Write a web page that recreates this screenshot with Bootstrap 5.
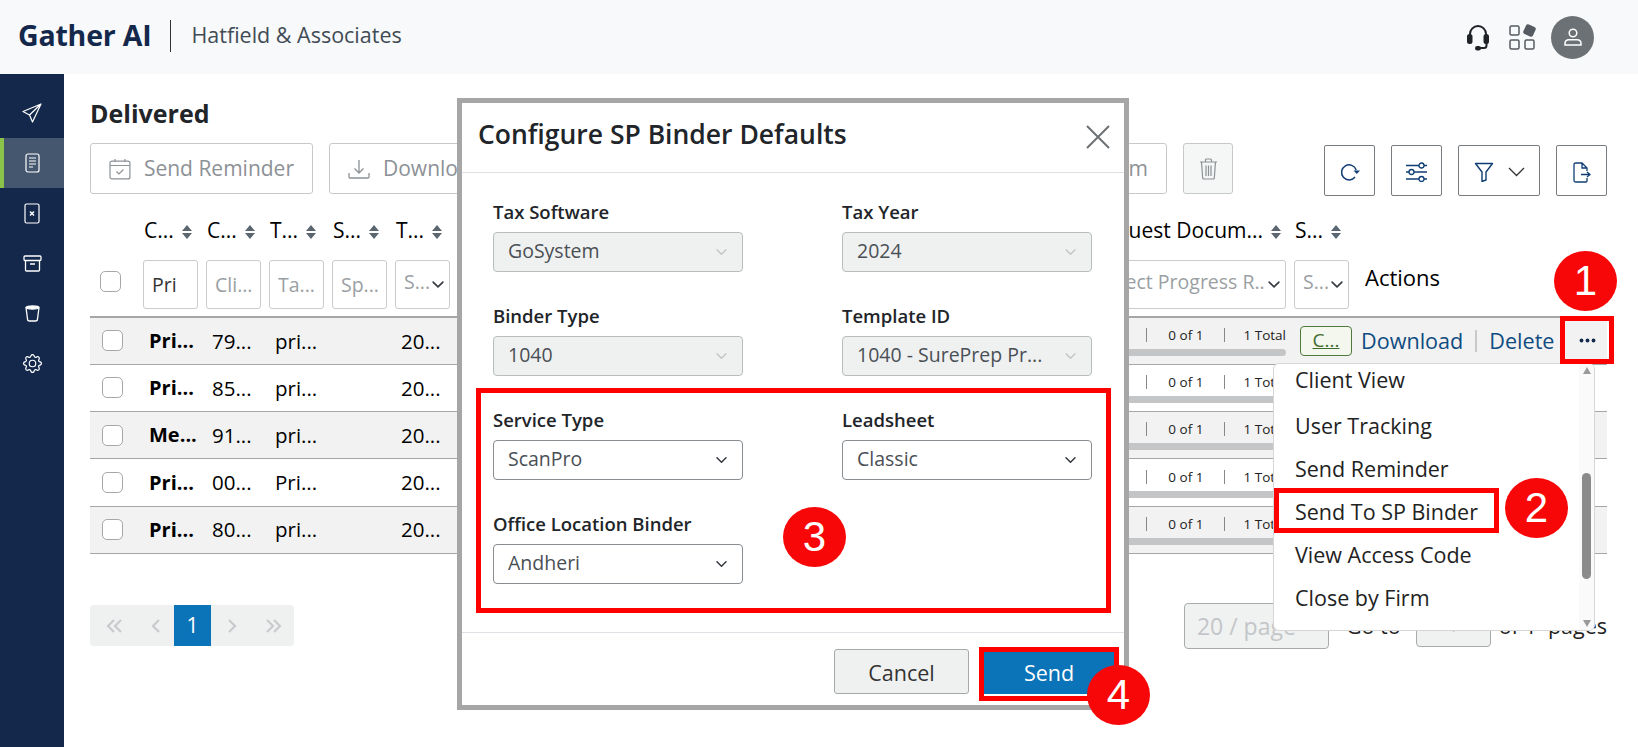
<!DOCTYPE html>
<html lang="en"><head><meta charset="utf-8"><title>Delivered</title>
<link href="https://cdn.jsdelivr.net/npm/bootstrap@5.3.0/dist/css/bootstrap.min.css" rel="stylesheet">
<style>
html,body{height:100%;overflow:hidden}
body{font-family:"Open Sans","Liberation Sans",sans-serif;color:#212529;background:#fff}
.gx-root{height:747px;width:1638px;overflow:hidden}
.gx-top{height:74px;background:#f8f9fa;flex:none;padding:0 44px 0 18px}
.gx-logo{font-size:28.500px;font-weight:700;color:#14284b;letter-spacing:-.2px;margin-bottom:3px}
.gx-vr{width:1px;height:32px;background:#333;margin:0 20px 3px 19px}
.gx-firm{font-size:21.500px;color:#414b55;margin-bottom:3px}
.gx-side{width:64px;background:#14284b;flex:none;padding-top:14px}
.gx-sitem{height:50px;color:#fff;border-left:4px solid transparent;padding-right:4px}
.gx-sitem.gx-on{background:#45566f;border-left-color:#8bc34a}
.gx-main{padding:0 31px 0 26px;width:1574px}
.gx-h{font-size:25px;font-weight:700;line-height:34px;margin:22px 0 13px;color:#212529}
.gx-tool{height:51px;font-size:21px;color:#8c9196;border:1px solid #c6c9cc;background:#fff;border-radius:3px;padding:0 18px;white-space:nowrap}
.gx-tool.gx-trash{width:50px;background:#f5f6f6;padding:0}
.gx-left{width:1143px}
.gx-ib{height:51px;width:51px;border:1px solid #777c80;border-radius:2px;background:#fff;color:#0f3d73;padding:0;margin-top:2px}
.gx-ib.gx-w{width:82px}
table.gx-t{table-layout:fixed;width:1517px;margin:16px 0 0;font-size:20.500px;--bs-table-bg:transparent;--bs-table-striped-bg:#f2f2f2;--bs-table-accent-bg:transparent;--bs-table-striped-color:#000;color:#000}
.gx-t th,.gx-t td{padding:0;border:0;background:transparent;white-space:nowrap;overflow:hidden}
.gx-t thead tr:first-child th{height:38px;font-weight:400;font-size:21px;padding-left:1px;vertical-align:middle}
.gx-t thead tr:nth-child(2) th{height:67px;font-weight:400;padding:0 8px 7px 0;vertical-align:bottom}
.gx-t tbody tr{height:47.300px}
.gx-t tbody td{border-bottom:1.600px solid #a6a6a6;vertical-align:middle;padding-left:6px}
.gx-t tbody{border-top:2.500px solid #a6a6a6}
.gx-t tbody tr:nth-child(odd) td{background:#f2f2f2}
.gx-t td.gx-b{font-weight:700;font-size:20px}
.gx-t td.gx-cc{padding-left:12px}
.gx-t th.gx-cc{padding-left:10px!important;padding-bottom:24px!important}
.gx-t td.gx-pc{padding:0;vertical-align:bottom}
.gx-sort{margin-left:8px;vertical-align:-1px}
.gx-cb{width:21px;height:21px;margin:0;border:1px solid #a6a6a6;border-radius:5px;--bs-form-check-bg:#fff;display:block}
.gx-f{height:49px;border:1px solid #c9ccce;border-radius:3px;font-size:19.500px;padding:0 8px;color:#333;background-color:#fff;box-shadow:none}
.gx-f::placeholder{color:#9a9fa3}
.gx-fs{height:49px;border:1px solid #c9ccce;border-radius:3px;font-size:19.500px;padding:0 20px 6px 8px;color:#9a9fa3;background-position:right 3px center;background-size:16px 13px;box-shadow:none}
.gx-rq{text-align:right;padding-right:8px!important}
.gx-prog{padding-right:8px;font-size:13.500px;line-height:18px;color:#222}
.gx-pr{gap:21px;justify-content:flex-end}
.gx-pr>span:last-child{margin-left:-3px}
.gx-sp{width:1px;height:14px;background:#888}
.gx-bar{height:7px;background:#c4c5c6;border-radius:0 4px 4px 0;margin:5px 0 8px}
.gx-ok{width:52px;height:30px;border:1px solid #4e7a3c;border-radius:4px;background:#f3f7ee;color:#3f6b2e;font-size:19px;line-height:27px;text-align:center;text-decoration:underline;margin-left:0}
.gx-act{font-size:21.600px;color:#0f4c81;text-decoration:none}
.gx-acts{margin-left:-2px;gap:12px}
.gx-sp2{width:2px;height:22px;background:#c7c9cb}
.gx-dots{width:17px;margin-left:12px;color:#14284b}
.gx-pgr{margin-top:49px}
.gx-pag{height:41px;width:204px;background:#eff1f1;border-radius:4px;margin:0;overflow:hidden}
.gx-pag .page-item .page-link{height:41px;border:0;background:transparent;color:#c8cbcd;padding:0;display:flex;align-items:center;justify-content:center;border-radius:0;margin:0}
.gx-pag .page-item.active .page-link{background:#0b73b8;color:#fff;font-size:21px;width:37px}
.gx-ps{width:145px;height:46px;background:#f0f1f1;border:1px solid #a8abad;border-radius:4px;font-size:23px;color:#c3c6c8;padding:0 12px;line-height:44px}
.gx-goi{width:75px;height:43px;background:#f0f1f1;border:1px solid #a8abad;border-radius:4px;text-align:center;color:#c3c6c8;font-size:18px;line-height:41px}
.gx-pt{font-size:21.500px;color:#222}
.gx-menu{position:absolute;left:1273px;top:363px;width:322px;height:268px;background:#fff;border:1px solid #d4d6d8;border-radius:6px;z-index:5;overflow:hidden}
.gx-menu .list-group-item{border:0;background:transparent;padding:0 0 0 21px;height:43px;line-height:43px;font-size:21.500px;color:#222;white-space:nowrap}
.gx-mlist{margin-top:-6px}
.gx-mlist .list-group-item:first-child{height:46px}
.gx-scroll{position:absolute;right:0;top:0;bottom:0;width:15px;background:#fafafa}
.gx-thumb{position:absolute;right:3px;top:109px;height:106px;width:9px;background:#8a8a8a;border-radius:5px}
.gx-arr{position:absolute;right:3px;width:0;height:0;border-left:4.500px solid transparent;border-right:4.500px solid transparent}
.gx-dlg{position:absolute;left:457px;top:98px;width:672px;height:612px;border:5px solid #a6a6a6;background:#fff;border-radius:0;z-index:6}
.gx-dlg .modal-header{height:70px;padding:0 14px 6px 16px;border-bottom:1px solid #dee2e6;border-radius:0}
.gx-dlg .modal-title{font-size:26.500px;font-weight:600;color:#212529}
.gx-x{background:none;border:0;padding:0;line-height:0;margin-top:4px}
.gx-dlg .modal-body{padding:27px 0 0 31px;height:459px;flex:none;display:grid;grid-template-columns:250px 250px;column-gap:99px;row-gap:32px;align-content:start}
.gx-lab{font-weight:600;font-size:18.500px;line-height:24px;margin:0 0 8px;color:#212529;display:block}
.gx-sel{height:40px;border:1px solid #898e92;border-radius:4px;font-size:19.500px;color:#4a4f55;padding:0 30px 3px 14px;background-size:15px 12px;background-position:right 13px center;box-shadow:none;--bs-body-color:#4a4f55}
.gx-sel:disabled{background-color:#eff1f1;border-color:#b9bcbe;color:#4a4f55;opacity:1;background-image:url("data:image/svg+xml,%3csvg xmlns='http://www.w3.org/2000/svg' viewBox='0 0 16 16'%3e%3cpath fill='none' stroke='%23c3c6c8' stroke-linecap='round' stroke-linejoin='round' stroke-width='2' d='m2 5 6 6 6-6'/%3e%3c/svg%3e")}
.gx-dlg .modal-footer{height:73px;padding:4px 10px 0 0;border-top:1px solid #dee2e6;gap:15px;border-radius:0;flex:none}
.gx-dlg .modal-footer>*{margin:0}
.gx-can{width:135px;height:45px;background:#eff1f1;border:1px solid #a6a9ab;border-radius:3px;font-size:21.500px;color:#333;line-height:1;padding:3px 0 0}
.gx-snd{width:130px;height:43px;background:#0b73b8;border:0;border-radius:0;font-size:21.500px;color:#fff;margin-top:2px!important;line-height:1;padding:2px 0 0}
.gx-rbox{position:absolute;border:5px solid #f00;z-index:7;pointer-events:none}
.gx-num{position:absolute;width:63px;height:60px;border-radius:50%;background:#f70707;color:#fff;font-family:"Liberation Sans",Arial,sans-serif;font-size:42px;line-height:60px;text-align:center;z-index:8}
</style></head>
<body>
<div class="gx-root position-relative d-flex flex-column">
 <header class="gx-top d-flex align-items-center">
  <span class="gx-logo">Gather AI</span><span class="gx-vr"></span><span class="gx-firm">Hatfield &amp; Associates</span>
  <div class="ms-auto d-flex align-items-center">
   <svg width="22" height="27" viewBox="0 0 22 27" fill="none" stroke="#1f2328" stroke-width="2"><path d="M3 15V10a8 8 0 0 1 16 0v5"/><rect x="1" y="11" width="3.500" height="8" rx="1.500" fill="#1f2328"/><rect x="17.500" y="11" width="3.500" height="8" rx="1.500" fill="#1f2328"/><path d="M19.500 19v2.500a2.500 2.500 0 0 1-2.500 2.500h-4"/><rect x="9" y="23" width="4" height="2.500" rx="1.200" fill="#1f2328"/></svg>
   <svg style="margin-left:20px" width="27" height="26" viewBox="0 0 27 26" fill="none" stroke="#555b60" stroke-width="1.500"><rect x="1" y="2" width="9" height="9" rx="1.500"/><rect x="1" y="16" width="9" height="9" rx="1.500"/><rect x="16" y="16" width="9" height="9" rx="1.500"/><rect x="16" y="2" width="9" height="9" rx="1.500" fill="#555b60" transform="rotate(25 20.500 6.500)"/></svg>
   <div class="rounded-circle d-flex align-items-center justify-content-center" style="width:43px;height:43px;background:#6b7174;margin-left:15px">
    <svg width="20" height="20" viewBox="0 0 20 20" fill="none" stroke="#fff" stroke-width="1.500"><circle cx="10" cy="6" r="3.800"/><path d="M2 18v-1.500c0-2.500 2-3.800 4-3.800h8c2 0 4 1.300 4 3.800V18z"/></svg>
   </div>
  </div>
 </header>
 <div class="d-flex flex-grow-1" style="min-height:0">
  <nav class="gx-side">
   <div class="gx-sitem d-flex align-items-center justify-content-center"><svg width="20" height="20" viewBox="0 0 20 20" fill="none" stroke="#fff" stroke-width="1.200" stroke-linejoin="round"><path d="M19 1 1 8.500 7.500 12 10.500 19zM19 1 7.500 12"/></svg></div>
   <div class="gx-sitem gx-on d-flex align-items-center justify-content-center"><svg width="15" height="20" viewBox="0 0 15 20" fill="none" stroke="#fff" stroke-width="1.200"><rect x="1" y="1" width="13" height="18" rx="2"/><path d="M4 5h7M4 8h7M4 11h7M4 14h4"/></svg></div>
   <div class="gx-sitem d-flex align-items-center justify-content-center"><svg width="16" height="21" viewBox="0 0 16 21" fill="none" stroke="#fff" stroke-width="1.200"><rect x="1" y="1" width="14" height="19" rx="1.500"/><path d="m6 8.500 4 4M10 8.500l-4 4" stroke-width="1.500"/></svg></div>
   <div class="gx-sitem d-flex align-items-center justify-content-center"><svg width="19" height="17" viewBox="0 0 19 17" fill="none" stroke="#fff" stroke-width="1.300"><rect x="1" y="1" width="17" height="4.500" rx="1"/><path d="M2.500 5.500V15a1 1 0 0 0 1 1h12a1 1 0 0 0 1-1V5.500M7 9h5"/></svg></div>
   <div class="gx-sitem d-flex align-items-center justify-content-center"><svg width="15" height="17" viewBox="0 0 15 17" fill="none" stroke="#fff" stroke-width="1.300"><ellipse cx="7.500" cy="2.500" rx="6.500" ry="1.500" fill="#fff"/><path d="M1 2.500 2.500 14a2 2 0 0 0 2 2h6a2 2 0 0 0 2-2L14 2.500"/></svg></div>
   <div class="gx-sitem d-flex align-items-center justify-content-center"><svg width="19" height="19" viewBox="0 0 16 16" fill="#fff"><path d="M8 4.754a3.246 3.246 0 1 0 0 6.492 3.246 3.246 0 0 0 0-6.492zM5.754 8a2.246 2.246 0 1 1 4.492 0 2.246 2.246 0 0 1-4.492 0z"/><path d="M9.796 1.343c-.527-1.790-3.065-1.790-3.592 0l-.094.319a.873.873 0 0 1-1.255.520l-.292-.160c-1.640-.892-3.433.902-2.540 2.541l.159.292a.873.873 0 0 1-.520 1.255l-.319.094c-1.790.527-1.790 3.065 0 3.592l.319.094a.873.873 0 0 1 .520 1.255l-.160.292c-.892 1.640.901 3.434 2.541 2.540l.292-.159a.873.873 0 0 1 1.255.520l.094.319c.527 1.790 3.065 1.790 3.592 0l.094-.319a.873.873 0 0 1 1.255-.520l.292.160c1.640.893 3.434-.902 2.540-2.541l-.159-.292a.873.873 0 0 1 .520-1.255l.319-.094c1.790-.527 1.790-3.065 0-3.592l-.319-.094a.873.873 0 0 1-.520-1.255l.160-.292c.893-1.640-.902-3.433-2.541-2.540l-.292.159a.873.873 0 0 1-1.255-.520l-.094-.319zm-2.633.283c.246-.835 1.428-.835 1.674 0l.094.319a1.873 1.873 0 0 0 2.693 1.115l.291-.160c.764-.415 1.600.420 1.184 1.185l-.159.292a1.873 1.873 0 0 0 1.116 2.692l.318.094c.835.246.835 1.428 0 1.674l-.319.094a1.873 1.873 0 0 0-1.115 2.693l.160.291c.415.764-.420 1.600-1.185 1.184l-.291-.159a1.873 1.873 0 0 0-2.693 1.116l-.094.318c-.246.835-1.428.835-1.674 0l-.094-.319a1.873 1.873 0 0 0-2.692-1.115l-.292.160c-.764.415-1.600-.420-1.184-1.185l.159-.291A1.873 1.873 0 0 0 1.945 8.930l-.319-.094c-.835-.246-.835-1.428 0-1.674l.319-.094A1.873 1.873 0 0 0 3.060 4.377l-.160-.292c-.415-.764.420-1.600 1.185-1.184l.292.159a1.873 1.873 0 0 0 2.692-1.115l.094-.319z"/></svg></div>
  </nav>
  <main class="gx-main">
   <h1 class="gx-h">Delivered</h1>
   <div class="d-flex align-items-start">
    <div class="gx-left d-flex" style="gap:16px">
     <button class="gx-tool d-flex align-items-center" style="width:223px" type="button"><svg style="margin-right:13px" width="22" height="22" viewBox="0 0 22 22" fill="none" stroke="#8c9196" stroke-width="1.200"><rect x="1" y="3" width="20" height="18" rx="2"/><path d="M1 7.500h20M6 1v3M16 1v3M7.500 13.500l2.500 2.500 4.500-4.500"/></svg>Send Reminder</button>
     <button class="gx-tool d-flex align-items-center" type="button" style="width:240px"><svg style="margin-right:13px" width="22" height="22" viewBox="0 0 22 22" fill="none" stroke="#8c9196" stroke-width="1.300"><path d="M11 2v13M6.500 10.500 11 15l4.500-4.500M1 15v4a1 1 0 0 0 1 1h18a1 1 0 0 0 1-1v-4"/></svg>Download</button>
     <button class="gx-tool ms-auto" type="button" style="width:180px;text-align:right">Close by Firm</button>
     <button class="gx-tool gx-trash d-flex align-items-center justify-content-center" type="button" aria-label="Delete"><svg width="19" height="22" viewBox="0 0 19 22" fill="none" stroke="#8c9196" stroke-width="1.200"><path d="M1 4h17M6.500 4V2a1 1 0 0 1 1-1h4a1 1 0 0 1 1 1v2M2.500 4l1.200 16a1 1 0 0 0 1 1h9.600a1 1 0 0 0 1-1L16.500 4M7 7.500V18M9.500 7.500V18M12 7.500V18"/></svg></button>
    </div>
    <div class="d-flex ms-auto" style="gap:16px">
     <button class="gx-ib" type="button" aria-label="Refresh"><svg width="20" height="20" viewBox="0 0 20 20" fill="none" stroke="currentColor" stroke-width="1.500"><path d="M15 15A7.500 7.500 0 1 1 16.200 8"/><path d="M13.500 8.500h6.500l-3.200 3.600z" fill="currentColor" stroke="none"/></svg></button>
     <button class="gx-ib" type="button" aria-label="Settings"><svg width="23" height="20" viewBox="0 0 23 20" fill="none" stroke="currentColor" stroke-width="1.300"><path d="M1 3.500h13M19 3.500h3M1 10h3M9 10h13M1 17h13M19 17h3"/><circle cx="16.500" cy="3.500" r="2.500"/><circle cx="6.500" cy="10" r="2.500"/><circle cx="16.500" cy="17" r="2.500"/></svg></button>
     <button class="gx-ib gx-w" type="button" aria-label="Filter"><svg width="20" height="20" viewBox="0 0 20 20" fill="none" stroke="currentColor" stroke-width="1.400" stroke-linejoin="round"><path d="M1.500 1.500h17L12 10v8l-4 1.500V10z"/></svg><svg style="margin-left:14px" width="17" height="10" viewBox="0 0 17 10" fill="none" stroke="#333" stroke-width="1.300"><path d="m1 1 7.500 7.500L16 1"/></svg></button>
     <button class="gx-ib" type="button" aria-label="Export"><svg width="18" height="21" viewBox="0 0 18 21" fill="none" stroke="currentColor" stroke-width="1.300"><path d="M14 9V6L9 1H2.500A1.500 1.500 0 0 0 1 2.500v16A1.500 1.500 0 0 0 2.500 20H13a1 1 0 0 0 1-1v-3M9 1v5h5M8 12.500h9M14 10l3 2.500-3 2.500"/></svg></button>
    </div>
   </div>
   <table class="table gx-t">
    <colgroup><col style="width:53px"><col style="width:63px"><col style="width:63px"><col style="width:63px"><col style="width:63px"><col style="width:63px"><col style="width:632px"><col style="width:204px"><col style="width:63px"><col style="width:250px"></colgroup>
    <thead>
     <tr><th></th>
      <th>C...<svg class="gx-sort" width="10" height="14" viewBox="0 0 10 14" fill="#5c6670"><path d="M5 0 10 6H0zM5 14 0 8h10z"/></svg></th>
      <th>C...<svg class="gx-sort" width="10" height="14" viewBox="0 0 10 14" fill="#5c6670"><path d="M5 0 10 6H0zM5 14 0 8h10z"/></svg></th>
      <th>T...<svg class="gx-sort" width="10" height="14" viewBox="0 0 10 14" fill="#5c6670"><path d="M5 0 10 6H0zM5 14 0 8h10z"/></svg></th>
      <th>S...<svg class="gx-sort" width="10" height="14" viewBox="0 0 10 14" fill="#5c6670"><path d="M5 0 10 6H0zM5 14 0 8h10z"/></svg></th>
      <th>T...<svg class="gx-sort" width="10" height="14" viewBox="0 0 10 14" fill="#5c6670"><path d="M5 0 10 6H0zM5 14 0 8h10z"/></svg></th>
      <th></th>
      <th class="gx-rq" style="padding-right:16px!important">Request Docum...<svg class="gx-sort" width="10" height="14" viewBox="0 0 10 14" fill="#5c6670"><path d="M5 0 10 6H0zM5 14 0 8h10z"/></svg></th>
      <th>S...<svg class="gx-sort" width="10" height="14" viewBox="0 0 10 14" fill="#5c6670"><path d="M5 0 10 6H0zM5 14 0 8h10z"/></svg></th>
      <th></th></tr>
     <tr><th class="gx-cc"><input class="form-check-input gx-cb" type="checkbox" aria-label="All"></th>
      <th><input class="form-control gx-f" value="Pri" aria-label="Filter"></th>
      <th><input class="form-control gx-f" placeholder="Cli..." aria-label="Filter"></th>
      <th><input class="form-control gx-f" placeholder="Ta..." aria-label="Filter"></th>
      <th><input class="form-control gx-f" placeholder="Sp..." aria-label="Filter"></th>
      <th><select class="form-select gx-fs" aria-label="Filter"><option>S...</option></select></th>
      <th></th>
      <th><select class="form-select gx-fs" aria-label="Filter"><option>Select Progress R...</option></select></th>
      <th><select class="form-select gx-fs" aria-label="Filter"><option>S...</option></select></th>
      <th style="padding:0 0 22px 8px;font-size:22px">Actions</th></tr>
    </thead>
    <tbody>
     <tr><td class="gx-cc"><input class="form-check-input gx-cb" type="checkbox" aria-label="Select"></td><td class="gx-b">Pri...</td><td>79...</td><td>pri...</td><td></td><td>20...</td><td></td>
      <td class="gx-pc"><div class="gx-prog"><div class="d-flex gx-pr align-items-center"><span class="gx-sp"></span><span>0 of 1</span><span class="gx-sp"></span><span>1 Total</span></div><div class="gx-bar"></div></div></td>
      <td><div class="gx-ok">C...</div></td>
      <td style="overflow:visible"><div class="d-flex align-items-center gx-acts"><a class="gx-act" href="#">Download</a><span class="gx-sp2"></span><a class="gx-act" href="#">Delete</a><svg class="gx-dots" height="5" viewBox="0 0 17 5" fill="currentColor"><circle cx="2.500" cy="2.500" r="1.900"/><circle cx="8.500" cy="2.500" r="1.900"/><circle cx="14.500" cy="2.500" r="1.900"/></svg></div></td></tr>
     <tr><td class="gx-cc"><input class="form-check-input gx-cb" type="checkbox" aria-label="Select"></td><td class="gx-b">Pri...</td><td>85...</td><td>pri...</td><td></td><td>20...</td><td></td>
      <td class="gx-pc"><div class="gx-prog"><div class="d-flex gx-pr align-items-center"><span class="gx-sp"></span><span>0 of 1</span><span class="gx-sp"></span><span>1 Total</span></div><div class="gx-bar"></div></div></td><td></td><td></td></tr>
     <tr><td class="gx-cc"><input class="form-check-input gx-cb" type="checkbox" aria-label="Select"></td><td class="gx-b">Me...</td><td>91...</td><td>pri...</td><td></td><td>20...</td><td></td>
      <td class="gx-pc"><div class="gx-prog"><div class="d-flex gx-pr align-items-center"><span class="gx-sp"></span><span>0 of 1</span><span class="gx-sp"></span><span>1 Total</span></div><div class="gx-bar"></div></div></td><td></td><td></td></tr>
     <tr><td class="gx-cc"><input class="form-check-input gx-cb" type="checkbox" aria-label="Select"></td><td class="gx-b">Pri...</td><td>00...</td><td>Pri...</td><td></td><td>20...</td><td></td>
      <td class="gx-pc"><div class="gx-prog"><div class="d-flex gx-pr align-items-center"><span class="gx-sp"></span><span>0 of 1</span><span class="gx-sp"></span><span>1 Total</span></div><div class="gx-bar"></div></div></td><td></td><td></td></tr>
     <tr><td class="gx-cc"><input class="form-check-input gx-cb" type="checkbox" aria-label="Select"></td><td class="gx-b">Pri...</td><td>80...</td><td>pri...</td><td></td><td>20...</td><td></td>
      <td class="gx-pc"><div class="gx-prog"><div class="d-flex gx-pr align-items-center"><span class="gx-sp"></span><span>0 of 1</span><span class="gx-sp"></span><span>1 Total</span></div><div class="gx-bar"></div></div></td><td></td><td></td></tr>
    </tbody>
   </table>
   <div class="d-flex align-items-center justify-content-between gx-pgr">
    <ul class="pagination gx-pag">
     <li class="page-item disabled"><a class="page-link" style="width:47px" href="#" aria-label="First"><svg width="16" height="14" viewBox="0 0 16 14" fill="none" stroke="currentColor" stroke-width="2.200"><path d="M8 1 2 7l6 6M15 1 9 7l6 6"/></svg></a></li>
     <li class="page-item disabled"><a class="page-link" style="width:37px" href="#" aria-label="Previous"><svg width="9" height="14" viewBox="0 0 9 14" fill="none" stroke="currentColor" stroke-width="2.200"><path d="M8 1 2 7l6 6"/></svg></a></li>
     <li class="page-item active"><a class="page-link" href="#">1</a></li>
     <li class="page-item disabled"><a class="page-link" style="width:42px" href="#" aria-label="Next"><svg width="9" height="14" viewBox="0 0 9 14" fill="none" stroke="currentColor" stroke-width="2.200"><path d="m1 1 6 6-6 6"/></svg></a></li>
     <li class="page-item disabled"><a class="page-link" style="width:41px" href="#" aria-label="Last"><svg width="16" height="14" viewBox="0 0 16 14" fill="none" stroke="currentColor" stroke-width="2.200"><path d="m1 1 6 6-6 6M8 1l6 6-6 6"/></svg></a></li>
    </ul>
    <div class="d-flex align-items-center">
     <div class="gx-ps">20 / page</div><span class="gx-pt" style="margin:0 15px 0 17px">Go to</span><div class="gx-goi">1</div><span class="gx-pt" style="margin-left:8px">of 1&nbsp; pages</span>
    </div>
   </div>
  </main>
 </div>

 <div class="gx-menu">
  <div class="list-group list-group-flush gx-mlist">
   <div class="list-group-item">Client View</div>
   <div class="list-group-item">User Tracking</div>
   <div class="list-group-item">Send Reminder</div>
   <div class="list-group-item">Send To SP Binder</div>
   <div class="list-group-item">View Access Code</div>
   <div class="list-group-item">Close by Firm</div>
  </div>
  <div class="gx-scroll"><span class="gx-arr" style="top:3px;border-bottom:7px solid #9a9a9a"></span><span class="gx-thumb"></span><span class="gx-arr" style="bottom:3px;border-top:7px solid #9a9a9a"></span></div>
 </div>

 <div class="gx-dlg modal-content">
  <div class="modal-header"><h2 class="modal-title">Configure SP Binder Defaults</h2><button class="gx-x ms-auto" type="button" aria-label="Close"><svg width="24" height="24" viewBox="0 0 24 24" stroke="#6d7175" stroke-width="2"><path d="m1 1 22 22M23 1 1 23"/></svg></button></div>
  <div class="modal-body">
   <div><label class="gx-lab">Tax Software</label><select class="form-select gx-sel" disabled aria-label="Tax Software"><option>GoSystem</option></select></div>
   <div><label class="gx-lab">Tax Year</label><select class="form-select gx-sel" disabled aria-label="Tax Year"><option>2024</option></select></div>
   <div><label class="gx-lab">Binder Type</label><select class="form-select gx-sel" disabled aria-label="Binder Type"><option>1040</option></select></div>
   <div><label class="gx-lab">Template ID</label><select class="form-select gx-sel" disabled aria-label="Template ID"><option>1040 - SurePrep Pr...</option></select></div>
   <div><label class="gx-lab">Service Type</label><select class="form-select gx-sel" aria-label="Service Type"><option>ScanPro</option></select></div>
   <div><label class="gx-lab">Leadsheet</label><select class="form-select gx-sel" aria-label="Leadsheet"><option>Classic</option></select></div>
   <div><label class="gx-lab">Office Location Binder</label><select class="form-select gx-sel" aria-label="Office Location Binder"><option>Andheri</option></select></div>
  </div>
  <div class="modal-footer"><button class="gx-can" type="button">Cancel</button><button class="gx-snd" type="button">Send</button></div>
 </div>

 <div class="gx-rbox" style="left:1560px;top:316px;width:54px;height:48px"></div>
 <div class="gx-rbox" style="left:1274px;top:488px;width:225px;height:45px"></div>
 <div class="gx-rbox" style="left:476px;top:388px;width:635px;height:225px"></div>
 <div class="gx-rbox" style="left:979px;top:647px;width:140px;height:54px"></div>
 <div class="gx-num" style="left:1554px;top:251px">1</div>
 <div class="gx-num" style="left:1505px;top:478px">2</div>
 <div class="gx-num" style="left:783px;top:507px">3</div>
 <div class="gx-num" style="left:1087px;top:665px">4</div>
</div>
<script src="https://cdn.jsdelivr.net/npm/bootstrap@5.3.0/dist/js/bootstrap.bundle.min.js"></script>
</body></html>
